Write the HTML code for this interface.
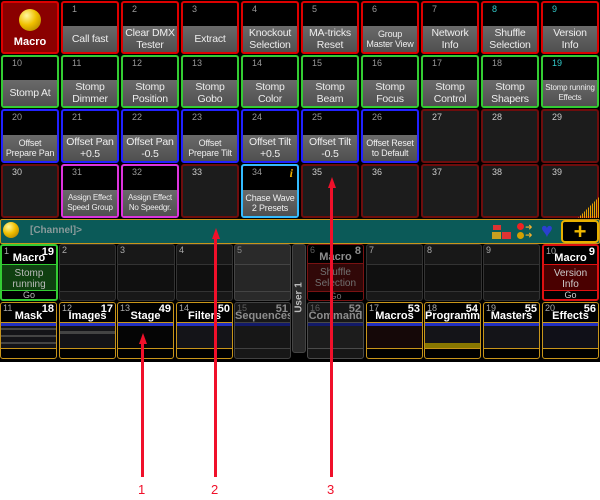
<!DOCTYPE html>
<html><head><meta charset="utf-8"><style>
*{margin:0;padding:0;box-sizing:border-box}
body{width:600px;height:500px;background:#fff;position:relative;overflow:hidden;font-family:"Liberation Sans","DejaVu Sans",sans-serif}
#top{position:absolute;left:0;top:0;width:600px;height:362px;background:#000}
.c{position:absolute;width:58px;border:2px solid #d00;border-radius:3px;background:#000;overflow:hidden}
.c .n{position:absolute;left:9px;top:1px;font-size:9px;color:#999}
.c .l{position:absolute;left:0;right:0;bottom:0;height:26px;background:linear-gradient(#6a6a6a,#505050);color:#eee;font-size:10.5px;line-height:12px;display:flex;align-items:center;justify-content:center;text-align:center;letter-spacing:-0.2px}
.c .l.s{font-size:9px;line-height:10px}
.c .l.xs{font-size:8px;line-height:10px}
.e{background:#1c1c1c}
.r{border-color:#d00}.g{border-color:#3c3}.b{border-color:#22f}.d{border-color:#6e0d0d}.m{border-color:#d3d}.cy{border-color:#3bf}
.x{position:absolute;border:1px solid #333;border-radius:3px;background:#181818;overflow:hidden}
.x .h{position:absolute;left:0;right:0;top:0;height:19px;background:#000;border-bottom:1px solid #333;color:#fff;font-weight:bold;font-size:11px;text-align:center;line-height:24px}
.x .ni{position:absolute;left:2px;top:0;font-size:9px;color:#aaa;font-weight:normal;line-height:10px}
.x .nr{position:absolute;right:2px;top:0;font-size:11px;color:#fff;font-weight:bold;line-height:12px}
.x .f{position:absolute;left:0;right:0;bottom:0;height:9px;border-top:1px solid #333;color:#ccc;font-size:9px;line-height:9px;text-align:center}
.v{position:absolute;top:302px;width:57px;height:57px;border:1px solid #c8951a;border-radius:3px;background:#000;overflow:hidden}
.v .h{position:absolute;left:0;right:0;top:0;height:20px;border-bottom:1px solid #c8951a;color:#fff;font-weight:bold;font-size:11px;text-align:center;line-height:26px}
.v .ni{position:absolute;left:2px;top:0;font-size:9px;color:#aaa;font-weight:normal;line-height:11px}
.v .nr{position:absolute;right:2px;top:0;font-size:11px;line-height:12px}
.v .p{position:absolute;left:0;right:0;top:20px;height:26px;background:#141418;border-bottom:1px solid #c8951a}
.v .p:before{content:"";position:absolute;left:0;top:0;width:100%;height:3px;background:#2230c0}
.dim{opacity:.55}
.arr{position:absolute;width:3px;background:#f0102a}
.ah{position:absolute;width:0;height:0;border-left:4px solid transparent;border-right:4px solid transparent;border-bottom:11px solid #f0102a}
.lab{position:absolute;top:482px;color:#f0102a;font-size:13px}
</style></head><body>
<div id="top">
<div class="c r" style="left:1px;top:1px;height:53px;background:#8a0000"><div style="position:absolute;left:16px;top:6px;width:22px;height:22px;border-radius:50%;background:radial-gradient(circle at 35% 30%,#fff7a0,#f0c000 45%,#a07000)"></div><div style="position:absolute;left:0;right:0;top:33px;text-align:center;color:#fff;font-weight:bold;font-size:11px">Macro</div></div>
<div class="c r" style="left:61px;top:1px;height:53px"><span class="n">1</span><div class="l">Call fast</div></div>
<div class="c r" style="left:121px;top:1px;height:53px"><span class="n">2</span><div class="l">Clear DMX<br>Tester</div></div>
<div class="c r" style="left:181px;top:1px;height:53px"><span class="n">3</span><div class="l">Extract</div></div>
<div class="c r" style="left:241px;top:1px;height:53px"><span class="n">4</span><div class="l">Knockout<br>Selection</div></div>
<div class="c r" style="left:301px;top:1px;height:53px"><span class="n">5</span><div class="l">MA-tricks<br>Reset</div></div>
<div class="c r" style="left:361px;top:1px;height:53px"><span class="n">6</span><div class="l s">Group<br>Master View</div></div>
<div class="c r" style="left:421px;top:1px;height:53px"><span class="n">7</span><div class="l">Network<br>Info</div></div>
<div class="c r" style="left:481px;top:1px;height:53px"><span class="n" style="color:#3cc">8</span><div class="l">Shuffle<br>Selection</div></div>
<div class="c r" style="left:541px;top:1px;height:53px"><span class="n" style="color:#3cc">9</span><div class="l">Version<br>Info</div></div>
<div class="c g" style="left:1px;top:55px;height:53px"><span class="n">10</span><div class="l">Stomp At</div></div>
<div class="c g" style="left:61px;top:55px;height:53px"><span class="n">11</span><div class="l">Stomp<br>Dimmer</div></div>
<div class="c g" style="left:121px;top:55px;height:53px"><span class="n">12</span><div class="l">Stomp<br>Position</div></div>
<div class="c g" style="left:181px;top:55px;height:53px"><span class="n">13</span><div class="l">Stomp<br>Gobo</div></div>
<div class="c g" style="left:241px;top:55px;height:53px"><span class="n">14</span><div class="l">Stomp<br>Color</div></div>
<div class="c g" style="left:301px;top:55px;height:53px"><span class="n">15</span><div class="l">Stomp<br>Beam</div></div>
<div class="c g" style="left:361px;top:55px;height:53px"><span class="n">16</span><div class="l">Stomp<br>Focus</div></div>
<div class="c g" style="left:421px;top:55px;height:53px"><span class="n">17</span><div class="l">Stomp<br>Control</div></div>
<div class="c g" style="left:481px;top:55px;height:53px"><span class="n">18</span><div class="l">Stomp<br>Shapers</div></div>
<div class="c g" style="left:541px;top:55px;height:53px"><span class="n" style="color:#3cc">19</span><div class="l xs">Stomp running<br>Effects</div></div>
<div class="c b" style="left:1px;top:109px;height:54px"><span class="n">20</span><div class="l s">Offset<br>Prepare Pan</div></div>
<div class="c b" style="left:61px;top:109px;height:54px"><span class="n">21</span><div class="l">Offset Pan<br>+0.5</div></div>
<div class="c b" style="left:121px;top:109px;height:54px"><span class="n">22</span><div class="l">Offset Pan<br>-0.5</div></div>
<div class="c b" style="left:181px;top:109px;height:54px"><span class="n">23</span><div class="l s">Offset<br>Prepare Tilt</div></div>
<div class="c b" style="left:241px;top:109px;height:54px"><span class="n">24</span><div class="l">Offset Tilt<br>+0.5</div></div>
<div class="c b" style="left:301px;top:109px;height:54px"><span class="n">25</span><div class="l">Offset Tilt<br>-0.5</div></div>
<div class="c b" style="left:361px;top:109px;height:54px"><span class="n">26</span><div class="l s">Offset Reset<br>to Default</div></div>
<div class="c d e" style="left:421px;top:109px;height:54px"><span class="n" style="color:#ccc">27</span></div>
<div class="c d e" style="left:481px;top:109px;height:54px"><span class="n" style="color:#ccc">28</span></div>
<div class="c d e" style="left:541px;top:109px;height:54px"><span class="n" style="color:#ccc">29</span></div>
<div class="c d e" style="left:1px;top:164px;height:54px"><span class="n" style="color:#ccc">30</span></div>
<div class="c m" style="left:61px;top:164px;height:54px"><span class="n">31</span><div class="l xs">Assign Effect<br>Speed Group</div></div>
<div class="c m" style="left:121px;top:164px;height:54px"><span class="n">32</span><div class="l xs">Assign Effect<br>No Speedgr.</div></div>
<div class="c d e" style="left:181px;top:164px;height:54px"><span class="n" style="color:#ccc">33</span></div>
<div class="c cy" style="left:241px;top:164px;height:54px"><span class="n">34</span><span style="position:absolute;right:4px;top:0;color:#f0b000;font-style:italic;font-weight:bold;font-size:12px;font-family:'Liberation Serif',serif">i</span><div class="l s">Chase Wave<br>2 Presets</div></div>
<div class="c d e" style="left:301px;top:164px;height:54px"><span class="n" style="color:#ccc">35</span></div>
<div class="c d e" style="left:361px;top:164px;height:54px"><span class="n" style="color:#ccc">36</span></div>
<div class="c d e" style="left:421px;top:164px;height:54px"><span class="n" style="color:#ccc">37</span></div>
<div class="c d e" style="left:481px;top:164px;height:54px"><span class="n" style="color:#ccc">38</span></div>
<div class="c d e" style="left:541px;top:164px;height:54px"><span class="n" style="color:#ccc">39</span></div>
<div style="position:absolute;left:578px;top:196px;width:22px;height:22px;background:repeating-linear-gradient(90deg,#e8a000 0 1px,transparent 1px 2px);clip-path:polygon(100% 0,100% 100%,0 100%)"></div>

<div style="position:absolute;left:0;top:219px;width:600px;height:25px;background:#0b5a58;border:1px solid #c8951a;border-radius:2px"></div>
<div style="position:absolute;left:3px;top:222px;width:16px;height:16px;border-radius:50%;background:radial-gradient(circle at 35% 30%,#fff7a0,#f0c000 45%,#a07000)"></div>
<div style="position:absolute;left:30px;top:225px;color:#8a9a9a;font-size:10px;font-weight:bold">[Channel]&gt;</div>
<div style="position:absolute;left:493px;top:225px;width:8px;height:5px;background:#d33"></div>
<div style="position:absolute;left:492px;top:232px;width:9px;height:7px;background:#c9a020"></div>
<div style="position:absolute;left:502px;top:232px;width:9px;height:7px;background:#d33"></div>
<div style="position:absolute;left:517px;top:223px;width:7px;height:7px;border-radius:50%;background:#e22"></div>
<div style="position:absolute;left:517px;top:232px;width:7px;height:7px;border-radius:50%;background:#d4a000"></div>
<div style="position:absolute;left:525px;top:223px;color:#f0b030;font-size:9px;line-height:8px;font-weight:bold">➜<br>➜</div>
<div style="position:absolute;left:541px;top:221px;color:#2a40d0;font-size:20px;line-height:20px">♥</div>
<div style="position:absolute;left:561px;top:220px;width:38px;height:23px;background:#000;border:2px solid #e8b000;border-radius:4px;color:#f0b800;font-size:22px;font-weight:bold;text-align:center;line-height:20px">+</div>

<div class="x" style="left:0;top:244px;width:58px;height:57px;border:2px solid #3c3;background:#0f4010"><div class="h" style="border-color:#3c3">Macro<span class="ni">1</span><span class="nr">19</span></div><div style="position:absolute;left:0;right:0;top:22px;color:#bbb;font-size:10px;line-height:11px;text-align:center">Stomp<br>running<br>Effects</div><div class="f" style="background:#000;border-color:#3c3;color:#bbb">Go</div></div>
<div class="x" style="left:59px;top:244px;width:57px;height:57px"><span style="position:absolute;left:2px;top:0;font-size:9px;color:#aaa">2</span><div style="position:absolute;left:0;right:0;top:19px;height:28px;border-top:1px solid #333;border-bottom:1px solid #333;background:#101010"></div></div>
<div class="x" style="left:117px;top:244px;width:58px;height:57px"><span style="position:absolute;left:2px;top:0;font-size:9px;color:#aaa">3</span><div style="position:absolute;left:0;right:0;top:19px;height:28px;border-top:1px solid #333;border-bottom:1px solid #333;background:#101010"></div></div>
<div class="x" style="left:176px;top:244px;width:57px;height:57px"><span style="position:absolute;left:2px;top:0;font-size:9px;color:#aaa">4</span><div style="position:absolute;left:0;right:0;top:19px;height:28px;border-top:1px solid #333;border-bottom:1px solid #333;background:#101010"></div></div>
<div class="x" style="left:234px;top:244px;width:57px;height:57px;background:#2a2a2a;border-color:#444"><span style="position:absolute;left:2px;top:0;font-size:9px;color:#888">5</span><div style="position:absolute;left:0;right:0;top:19px;height:28px;border-top:1px solid #444;border-bottom:1px solid #444;background:#262626"></div></div>
<div style="position:absolute;left:292px;top:244px;width:14px;height:109px;background:#2a2a2a;border:1px solid #444;border-radius:3px"></div>
<div style="position:absolute;left:280px;top:292px;width:38px;transform:rotate(-90deg);color:#bbb;font-size:10px;font-weight:bold;text-align:center">User 1</div>
<div class="x dim" style="left:307px;top:244px;width:57px;height:57px;border-color:#d22;background:#5a1010"><div class="h" style="border-color:#d22">Macro<span class="ni">6</span><span class="nr">8</span></div><div style="position:absolute;left:0;right:0;top:22px;color:#ccc;font-size:10px;line-height:11px;text-align:center">Shuffle<br>Selection</div><div class="f" style="background:#000;border-color:#d22">Go</div></div>
<div class="x" style="left:366px;top:244px;width:57px;height:57px"><span style="position:absolute;left:2px;top:0;font-size:9px;color:#aaa">7</span><div style="position:absolute;left:0;right:0;top:19px;height:28px;border-top:1px solid #333;border-bottom:1px solid #333;background:#101010"></div></div>
<div class="x" style="left:424px;top:244px;width:58px;height:57px"><span style="position:absolute;left:2px;top:0;font-size:9px;color:#aaa">8</span><div style="position:absolute;left:0;right:0;top:19px;height:28px;border-top:1px solid #333;border-bottom:1px solid #333;background:#101010"></div></div>
<div class="x" style="left:483px;top:244px;width:57px;height:57px"><span style="position:absolute;left:2px;top:0;font-size:9px;color:#aaa">9</span><div style="position:absolute;left:0;right:0;top:19px;height:28px;border-top:1px solid #333;border-bottom:1px solid #333;background:#101010"></div></div>
<div class="x" style="left:542px;top:244px;width:57px;height:57px;border:2px solid #d11;background:#4a0000"><div class="h" style="border-color:#d11">Macro<span class="ni">10</span><span class="nr">9</span></div><div style="position:absolute;left:0;right:0;top:22px;color:#ccc;font-size:10px;line-height:11px;text-align:center">Version<br>Info</div><div class="f" style="background:#000;border-color:#d11">Go</div></div>

<div class="v" style="left:0"><div class="h">Mask<span class="ni">11</span><span class="nr">18</span></div><div class="p" style="background:repeating-linear-gradient(#141418 0 5px,#444 5px 7px)"></div></div>
<div class="v" style="left:59px"><div class="h">Images<span class="ni">12</span><span class="nr">17</span></div><div class="p" style="background:linear-gradient(#141418 0 8px,#444 8px 11px,#141418 11px)"></div></div>
<div class="v" style="left:117px"><div class="h">Stage<span class="ni">13</span><span class="nr">49</span></div><div class="p" style="background:#050505"></div></div>
<div class="v" style="left:176px"><div class="h">Filters<span class="ni">14</span><span class="nr">50</span></div><div class="p"></div></div>
<div class="v dim" style="left:234px;border-color:#777;background:#2a2a2a"><div class="h" style="border-color:#777">Sequences<span class="ni">15</span><span class="nr">51</span></div><div class="p" style="background:#2a2a2a;border-color:#777"></div></div>
<div class="v dim" style="left:307px;border-color:#888;background:#2a2a2a"><div class="h" style="border-color:#888">Command<span class="ni">16</span><span class="nr">52</span></div><div class="p" style="background:#333;border-color:#888"></div></div>
<div class="v" style="left:366px"><div class="h">Macros<span class="ni">17</span><span class="nr">53</span></div><div class="p" style="background:#150808"></div></div>
<div class="v" style="left:424px"><div class="h">Programm<span class="ni">18</span><span class="nr">54</span></div><div class="p" style="background:linear-gradient(#141418 0 20px,#887700 20px)"></div></div>
<div class="v" style="left:483px"><div class="h">Masters<span class="ni">19</span><span class="nr">55</span></div><div class="p"></div></div>
<div class="v" style="left:542px"><div class="h">Effects<span class="ni">20</span><span class="nr">56</span></div><div class="p" style="background:#101018"></div></div>
</div>

<div class="arr" style="left:141px;top:342px;height:135px"></div><div class="ah" style="left:138.5px;top:333px"></div>
<div class="arr" style="left:214px;top:237px;height:240px"></div><div class="ah" style="left:211.5px;top:228px"></div>
<div class="arr" style="left:330px;top:186px;height:291px"></div><div class="ah" style="left:327.5px;top:177px"></div>
<div class="lab" style="left:138px">1</div>
<div class="lab" style="left:211px">2</div>
<div class="lab" style="left:327px">3</div>
</body></html>
